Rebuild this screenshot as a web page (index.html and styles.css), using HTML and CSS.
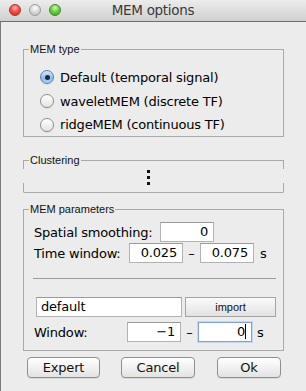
FILE: index.html
```html
<!DOCTYPE html>
<html>
<head>
<meta charset="utf-8">
<link rel="stylesheet" href="styles.css">
</head>
<body>
<div class="window">
  <div class="titlebar">
    <div class="lights">
      <span class="light red"></span>
      <span class="light gray"></span>
      <span class="light green"></span>
    </div>
    <div class="title">MEM options</div>
    <div></div>
  </div>
  <div class="content">
    <fieldset class="group group-type">
      <legend>MEM type</legend>
      <div class="radios">
        <div class="radio-row"><span class="radio on"></span><span>Default (temporal signal)</span></div>
        <div class="radio-row"><span class="radio"></span><span>waveletMEM (discrete TF)</span></div>
        <div class="radio-row"><span class="radio"></span><span>ridgeMEM (continuous TF)</span></div>
      </div>
    </fieldset>
    <fieldset class="group group-cluster">
      <legend>Clustering</legend>
      <div class="dots"><i></i><i></i><i></i></div>
    </fieldset>
    <fieldset class="group group-params">
      <legend>MEM parameters</legend>
      <div class="params">
        <div class="row">
          <span class="label label-spatial">Spatial smoothing:</span>
          <div class="field">0</div>
        </div>
        <div class="row">
          <span class="label label-time">Time window:</span>
          <div class="field">0.025</div>
          <span class="dash">–</span>
          <div class="field">0.075</div>
          <span class="unit">s</span>
        </div>
        <div class="sep"></div>
        <div class="row row-default">
          <div class="field field-name">default</div>
          <div class="import">import</div>
        </div>
        <div class="row row-window">
          <span class="label label-window">Window:</span>
          <div class="field">−1</div>
          <span class="dash">–</span>
          <div class="field focused">0<span class="caret"></span></div>
          <span class="unit unit-window">s</span>
        </div>
      </div>
    </fieldset>
    <div class="actions">
      <div class="btn btn-expert">Expert</div>
      <div class="btn btn-cancel">Cancel</div>
      <div class="btn btn-ok">Ok</div>
    </div>
  </div>
</div>
</body>
</html>
```
FILE: styles.css
```css
* { box-sizing: border-box; }
html, body { margin: 0; padding: 0; }
body {
  width: 306px;
  height: 391px;
  overflow: hidden;
  background: #ececec;
  font-family: "DejaVu Sans", sans-serif;
  font-size: 13px;
  letter-spacing: -0.2px;
  color: #000;
}
.window { width: 306px; height: 391px; display: flex; flex-direction: column; }
.titlebar {
  height: 22px;
  flex: none;
  display: grid;
  grid-template-columns: 1fr auto 1fr;
  align-items: center;
  background: linear-gradient(#ececec, #d0d0d0);
  border-bottom: 1px solid #6e6e6e;
}
.lights { display: flex; gap: 8px; padding-left: 9px; padding-bottom: 1px; }
.light {
  width: 12px; height: 12px; border-radius: 50%;
  border: 1px solid rgba(0,0,0,0.3);
}
.light.red { background: radial-gradient(circle at 50% 30%, #ffb3ad 0, #f2514a 45%, #c9231d 100%); border-color: #b5312c; }
.light.gray { background: radial-gradient(circle at 50% 30%, #ffffff 0, #d8d8d8 50%, #b6b6b6 100%); border-color: #9c9c9c; }
.light.green { background: radial-gradient(circle at 50% 30%, #d4f7b8 0, #6bd045 45%, #3e9b22 100%); border-color: #3f8d2a; }
.title {
  font-size: 13.5px;
  letter-spacing: -0.3px;
  color: #3a3a3a;
  padding-bottom: 1px;
}
.content {
  flex: 1;
  border-left: 1px solid #7a7a7a;
  display: flex;
  flex-direction: column;
  align-items: flex-start;
}
.group {
  width: 261px;
  min-width: 0;
  margin: 0 0 0 22px;
  padding: 0;
  border: 1px solid #a9a9a9;
}
.group legend {
  font-family: "Liberation Sans", Arial, sans-serif;
  font-size: 11px;
  line-height: 13px;
  letter-spacing: 0;
  padding: 0 1px;
  margin-left: 5px;
  color: #111;
}
.group-type { margin-top: 21px; }
.group-cluster {
  margin-top: 17px;
  border-left-color: transparent;
  border-right-color: transparent;
}
.group-params { margin-top: 10px; }

.radios { padding: 9px 0 0 16px; }
.radio-row { height: 24px; display: flex; align-items: center; gap: 6px; }
.radio-row:last-child { height: 23px; }
.radio {
  width: 14px; height: 14px; border-radius: 50%;
  border: 1px solid #8d8d8d;
  background: linear-gradient(#ffffff, #e4e4e4);
  box-shadow: 0 1px 1px rgba(0,0,0,0.08);
  display: flex; align-items: center; justify-content: center;
}
.radio.on {
  border-color: #5b7ead;
  background: linear-gradient(#d6e8fc, #8dbcf0 60%, #aed3fa);
}
.radio.on::after {
  content: "";
  width: 5px; height: 5px; border-radius: 50%;
  background: #1d2a3a;
}

.dots {
  position: relative;
  display: flex; flex-direction: column; gap: 3px;
  padding: 3px 0 7px 123px;
}
.dots i { display: block; width: 3px; height: 3px; background: #111; }
.dots::before, .dots::after {
  content: "";
  position: absolute;
  left: -1px; right: -1px;
  border-left: 1px solid #a9a9a9;
  border-right: 1px solid #a9a9a9;
}
.dots::before { top: -7px; height: 9px; }
.dots::after { bottom: 0; height: 9px; }

.params { padding: 6px 0 8px 10px; }
.row { display: flex; align-items: center; height: 20px; }
.row + .row { margin-top: 1px; }
.label { flex: none; }
.label-spatial { width: 126px; }
.label-time { width: 95px; }
.label-window { width: 93px; }
.field {
  width: 54px; height: 20px;
  border: 1px solid #b2b2b2;
  border-top-color: #9a9a9a;
  background: #fff;
  text-align: right;
  padding-right: 5px;
  line-height: 18px;
  flex: none;
}
.field.focused { border-color: #7da2d6; box-shadow: 0 0 0 1px #c6d9f2; }
.caret {
  display: inline-block;
  width: 1px; height: 15px;
  background: #000;
  vertical-align: -3px;
}
.dash { width: 17px; text-align: center; flex: none; }
.unit { margin-left: 6px; }
.unit-window { margin-left: 5px; }
.sep { width: 243px; height: 1px; background: #9b9b9b; margin: 15px 0 0 -1px; }
.row.row-default { margin-top: 18px; }
.field-name { width: 146px; margin-left: 2px; text-align: left; padding-left: 4px; }
.import {
  width: 91px; height: 20px; margin-left: 3px;
  border: 1px solid #a3a3a3;
  background: linear-gradient(#fafafa, #e2e2e2);
  font-family: "Liberation Sans", Arial, sans-serif;
  font-size: 11px;
  letter-spacing: 0;
  display: flex; align-items: center; justify-content: center;
  color: #111;
}
.row.row-window { margin-top: 5px; }

.actions { display: flex; margin-top: 6px; padding-left: 26px; }
.btn {
  height: 21px;
  border: 1px solid #8f8f8f;
  border-radius: 4px;
  background: linear-gradient(#ffffff, #f1f1f1 50%, #e3e3e3);
  box-shadow: 0 1px 0 rgba(0,0,0,0.08);
  display: flex; align-items: center; justify-content: center;
  color: #111;
}
.btn-expert { width: 73px; }
.btn-cancel { width: 74px; margin-left: 21px; }
.btn-ok { width: 64px; margin-left: 22px; }
```
